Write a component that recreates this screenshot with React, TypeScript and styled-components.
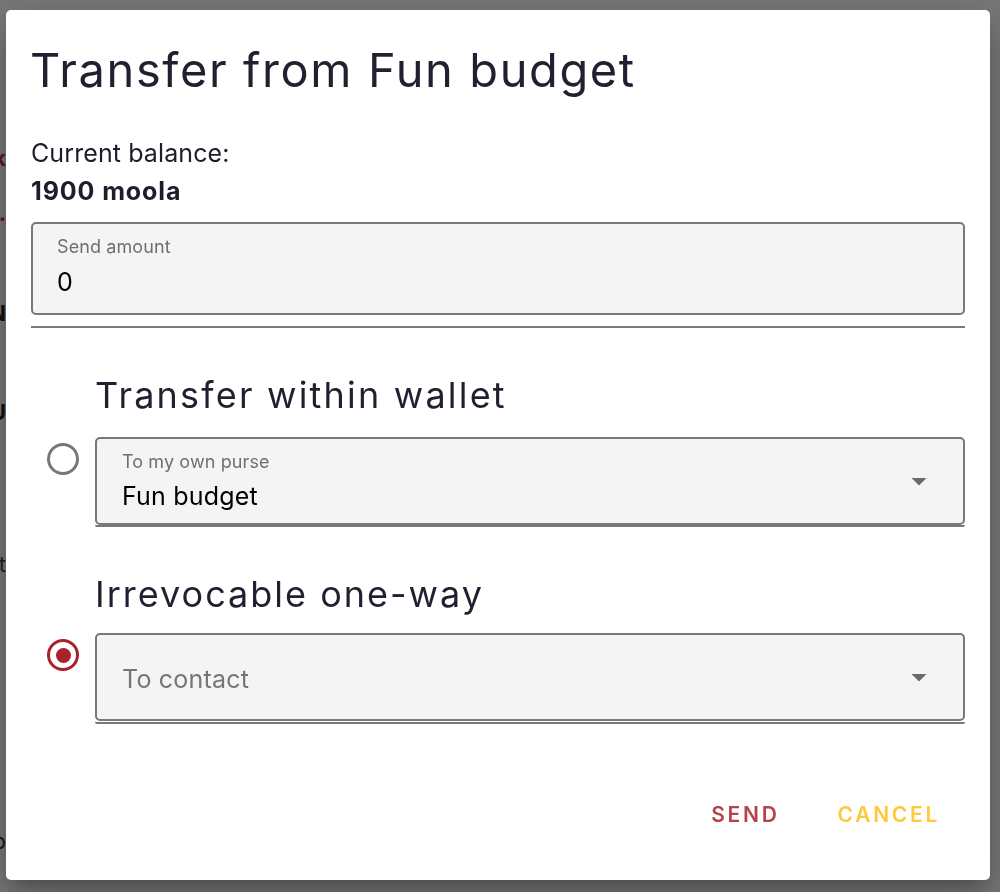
import React from "react";
import styled, { createGlobalStyle } from "styled-components";

const GlobalStyle = createGlobalStyle`
  html, body {
    margin: 0;
    padding: 0;
    background: #ffffff;
  }
  body {
    font-family: Inter, "Liberation Sans", sans-serif;
    width: 1000px;
    height: 892px;
    overflow: hidden;
  }
`;

const Page = styled.div`
  height: 892px;
  background: #ffffff;
  display: flex;
`;

const PeekStrip = styled.div`
  width: 6px;
  overflow: hidden;
  display: flex;
  flex-direction: column;
`;

const PeekLine = styled.div<{ $top: number; $color: string; $bold?: boolean }>`
  margin-top: ${(p) => p.$top}px;
  display: flex;
  justify-content: flex-end;
  white-space: nowrap;
  font-size: 22px;
  line-height: 26px;
  font-weight: ${(p) => (p.$bold ? 700 : 400)};
  color: ${(p) => p.$color};
`;

const Backdrop = styled.div`
  position: fixed;
  inset: 0;
  background: rgba(0, 0, 0, 0.535);
  display: flex;
  padding: 10px 10px 12px 6px;
  box-sizing: border-box;
`;

const Dialog = styled.div`
  flex: 1;
  background: #ffffff;
  border-radius: 5px;
  box-shadow: 0 11px 15px -7px rgba(0, 0, 0, 0.2),
    0 24px 38px 3px rgba(0, 0, 0, 0.14), 0 9px 46px 8px rgba(0, 0, 0, 0.12);
  padding: 32px 25px 0 25px;
  display: flex;
  flex-direction: column;
  box-sizing: border-box;
`;

const Title = styled.h2`
  margin: 0 0 0 -1px;
  font-family: Inter, "Liberation Sans", sans-serif;
  font-weight: 400;
  font-size: 47px;
  line-height: 56px;
  letter-spacing: 1.6px;
  color: #221f30;
`;

const BodyLine = styled.div<{ $bold?: boolean; $top: number }>`
  margin-top: ${(p) => p.$top}px;
  font-size: 25px;
  line-height: 38px;
  font-weight: ${(p) => (p.$bold ? 700 : 400)};
  letter-spacing: ${(p) => (p.$bold ? "0.9px" : "0.1px")};
  color: #1f1c2c;
`;

const FieldBox = styled.div`
  margin-top: 12px;
  height: 93px;
  box-sizing: border-box;
  border: 2px solid #787878;
  border-radius: 5px;
  background: #f4f4f4;
  padding: 12px 24px 0 24px;
  display: flex;
  flex-direction: column;
`;

const FieldLabel = styled.div`
  font-size: 18px;
  line-height: 22px;
  letter-spacing: 0.1px;
  color: #6f6f6f;
`;

const FieldValue = styled.div<{ $top: number }>`
  margin-top: ${(p) => p.$top}px;
  font-size: 25px;
  line-height: 30px;
  letter-spacing: 0.2px;
  color: #000000;
`;

const Rule = styled.div<{ $top: number }>`
  margin-top: ${(p) => p.$top}px;
  height: 2px;
  background: #7b7b7b;
`;

const Section = styled.div<{ $top: number; $gap: number }>`
  margin-top: ${(p) => p.$top}px;
  display: grid;
  grid-template-columns: 64px 1fr;
  row-gap: ${(p) => p.$gap}px;
`;

const SectionHeading = styled.h3<{ $spacing: number }>`
  grid-column: 2;
  margin: 0;
  font-family: Inter, "Liberation Sans", sans-serif;
  font-weight: 400;
  font-size: 36px;
  line-height: 42px;
  letter-spacing: ${(p) => p.$spacing}px;
  color: #221f30;
`;

const RadioCell = styled.div`
  grid-column: 1;
  padding: 6px 0 0 16px;
`;

const Radio = styled.div<{ $checked?: boolean }>`
  width: 32px;
  height: 32px;
  box-sizing: border-box;
  border-radius: 50%;
  border: 3px solid ${(p) => (p.$checked ? "#a8222b" : "#777777")};
  display: flex;
  align-items: center;
  justify-content: center;
  &::after {
    content: "";
    width: 15px;
    height: 15px;
    border-radius: 50%;
    background: ${(p) => (p.$checked ? "#a8222b" : "transparent")};
  }
`;

const SelectWrap = styled.div`
  grid-column: 2;
  display: flex;
  flex-direction: column;
`;

const SelectBox = styled.div`
  height: 88px;
  box-sizing: border-box;
  border: 2px solid #787878;
  border-radius: 5px;
  background: #f4f4f4;
  display: flex;
  align-items: center;
  padding: 0 26px 0 25px;
`;

const SelectContent = styled.div<{ $pad: number }>`
  flex: 1;
  display: flex;
  flex-direction: column;
  padding-top: ${(p) => p.$pad}px;
`;

const SelectLabel = styled.div`
  font-size: 18px;
  line-height: 22px;
  letter-spacing: 0.1px;
  color: #6f6f6f;
`;

const SelectValue = styled.div<{ $placeholder?: boolean; $top: number }>`
  margin-top: ${(p) => p.$top}px;
  font-size: 25px;
  line-height: 30px;
  letter-spacing: 0.2px;
  color: ${(p) => (p.$placeholder ? "#767676" : "#000000")};
`;

const Arrow = styled.svg`
  width: 36px;
  height: 36px;
  flex: none;
  fill: #6a6a6a;
`;

const SelectUnderline = styled.div<{ $gap: number }>`
  margin-top: ${(p) => p.$gap}px;
  height: 2px;
  background: #787878;
  border-radius: 0 0 3px 3px;
`;

const Footer = styled.div`
  margin-top: 73px;
  display: flex;
  justify-content: flex-end;
  gap: 34px;
  padding-right: 13px;
`;

const Button = styled.button<{ $color: string }>`
  background: none;
  border: none;
  padding: 5px 12px;
  font-family: Inter, "Liberation Sans", sans-serif;
  font-size: 21px;
  line-height: 26px;
  font-weight: 600;
  letter-spacing: 2.7px;
  text-transform: uppercase;
  color: ${(p) => p.$color};
  cursor: pointer;
`;

const DropArrow = () => (
  <Arrow viewBox="0 0 24 24">
    <path d="M7 10l5 5 5-5z" />
  </Arrow>
);

export default function App() {
  return (
    <>
      <GlobalStyle />
      <Page>
        <PeekStrip>
          <PeekLine $top={145} $color="#d32f2f" $bold>
            Back
          </PeekLine>
          <PeekLine $top={29} $color="#d32f2f" $bold>
            ...
          </PeekLine>
          <PeekLine $top={74} $color="#222222" $bold>
            MAIN
          </PeekLine>
          <PeekLine $top={73} $color="#222222" $bold>
            BU
          </PeekLine>
          <PeekLine $top={126} $color="#444444">
            cost
          </PeekLine>
          <PeekLine $top={251} $color="#333333">
            Sup
          </PeekLine>
        </PeekStrip>
      </Page>
      <Backdrop>
        <Dialog>
          <Title>Transfer from Fun budget</Title>
          <BodyLine $top={36}>Current balance:</BodyLine>
          <BodyLine $top={0} $bold>
            1900 moola
          </BodyLine>
          <FieldBox>
            <FieldLabel>Send amount</FieldLabel>
            <FieldValue $top={9}>0</FieldValue>
          </FieldBox>
          <Rule $top={11} />
          <Section $top={46} $gap={21}>
            <SectionHeading $spacing={2.2}>Transfer within wallet</SectionHeading>
            <RadioCell>
              <Radio />
            </RadioCell>
            <SelectWrap>
              <SelectBox>
                <SelectContent $pad={0}>
                  <SelectLabel>To my own purse</SelectLabel>
                  <SelectValue $top={8}>Fun budget</SelectValue>
                </SelectContent>
                <DropArrow />
              </SelectBox>
              <SelectUnderline $gap={0} />
            </SelectWrap>
          </Section>
          <Section $top={46} $gap={18}>
            <SectionHeading $spacing={2}>Irrevocable one-way</SectionHeading>
            <RadioCell>
              <Radio $checked />
            </RadioCell>
            <SelectWrap>
              <SelectBox>
                <SelectContent $pad={3}>
                  <SelectValue $placeholder $top={0}>
                    To contact
                  </SelectValue>
                </SelectContent>
                <DropArrow />
              </SelectBox>
              <SelectUnderline $gap={1} />
            </SelectWrap>
          </Section>
          <Footer>
            <Button $color="#b7424b">Send</Button>
            <Button $color="#fec93d">Cancel</Button>
          </Footer>
        </Dialog>
      </Backdrop>
    </>
  );
}
